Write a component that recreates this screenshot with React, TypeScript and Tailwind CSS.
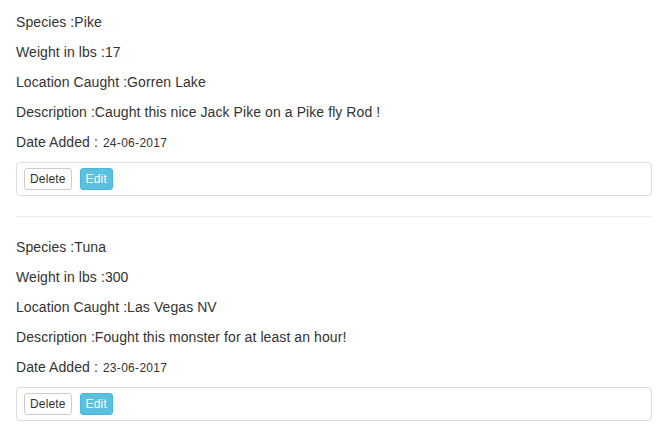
import React from "react";

const items = [
  { species: "Pike", weight: "17", location: "Gorren Lake", desc: "Caught this nice Jack Pike on a Pike fly Rod !", date: "24-06-2017" },
  { species: "Tuna", weight: "300", location: "Las Vegas NV", desc: "Fought this monster for at least an hour!", date: "23-06-2017" },
];

function Entry({ it }: { it: (typeof items)[number] }) {
  return (
    <div>
      <p className="leading-5 mb-[10px]">Species :{it.species}</p>
      <p className="leading-5 mb-[10px]">Weight in lbs :{it.weight}</p>
      <p className="leading-5 mb-[10px]">Location Caught :{it.location}</p>
      <p className="leading-5 mb-[10px]">Description :{it.desc}</p>
      <p className="leading-5 h-5 mb-[10px]">
        Date Added : <span className="text-[12px] leading-[14px] tracking-[0.3px] ml-[1px]">{it.date}</span>
      </p>
      <div className="border border-[#ddd] rounded-[4px] py-[5px] pl-[7px] pr-[5px] flex gap-[8px]">
        <button className="h-[22px] px-[5px] border border-[#ccc] rounded-[3px] bg-white text-[12px] leading-[18px] tracking-[0.15px] text-[#333]">Delete</button>
        <button className="h-[22px] px-[5px] border border-[#46b8da] rounded-[3px] bg-[#5bc0de] text-[12px] leading-[18px] tracking-[0.15px] text-white">Edit</button>
      </div>
    </div>
  );
}

export default function App() {
  return (
    <div className="bg-white min-h-[434px] text-[14px] text-[#333] tracking-[0.08px]" style={{ fontFamily: '"Liberation Sans", Arial, sans-serif' }}>
      <div className="pl-4 pt-3 w-[652px]">
        <Entry it={items[0]} />
        <hr className="my-5 border-0 border-t border-[#eee]" />
        <Entry it={items[1]} />
      </div>
    </div>
  );
}
